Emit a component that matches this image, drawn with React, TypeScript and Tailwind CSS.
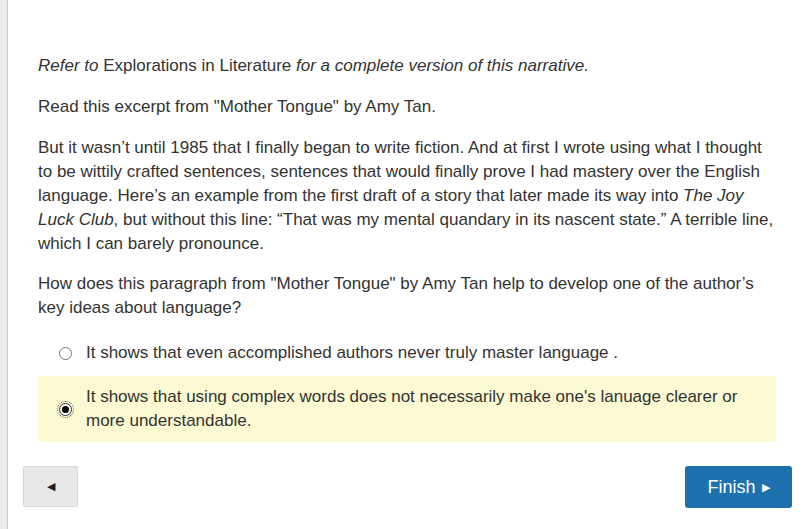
import React, { useState } from "react";

const options = [
  "It shows that even accomplished authors never truly master language .",
  "It shows that using complex words does not necessarily make one's lanuage clearer or more understandable.",
];

const App = () => {
  const [selected, setSelected] = useState(1);

  return (
    <div
      className="flex w-[807px] h-[529px] bg-white text-[#333] overflow-hidden"
      style={{ fontFamily: '"Liberation Sans", Arial, sans-serif' }}
    >
      {/* Left rail */}
      <div className="w-[8px] shrink-0 bg-[#ededed] border-r border-[#cacaca]" />

      <div className="flex-1 flex flex-col">
        {/* Question */}
        <div className="pl-[30px] pr-[31px] pt-[54px] text-[17px] leading-[24px]">
          <p className="mb-[17px]">
            <i>Refer to</i> Explorations in Literature <i>for a complete version of this narrative.</i>
          </p>
          <p className="mb-[17px]">Read this excerpt from "Mother Tongue" by Amy Tan.</p>
          <p className="mb-[16px]">
            But it wasn’t until 1985 that I finally began to write fiction. And at first I wrote using what I thought
            to be wittily crafted sentences, sentences that would finally prove I had mastery over the English
            language. Here’s an example from the first draft of a story that later made its way into <i>The Joy
            Luck Club</i>, but without this line: “That was my mental quandary in its nascent state.” A terrible line,
            which I can barely pronounce.
          </p>
          <p>
            How does this paragraph from "Mother Tongue" by Amy Tan help to develop one of the author’s key ideas
            about language?
          </p>

          {/* Answers */}
          <div className="mt-[12px] flex flex-col gap-[2px]">
            {options.map((opt, i) => (
              <label
                key={i}
                onClick={() => setSelected(i)}
                className={`flex items-center cursor-pointer py-[9px] pr-[20px] ${
                  selected === i ? "bg-[#fbfad3]" : ""
                }`}
              >
                <span className="w-[48px] shrink-0 flex justify-start pl-[21px]">
                  <span
                    className={`w-[13px] h-[13px] rounded-full border flex items-center justify-center bg-white ${
                      selected === i
                        ? "border-[#333] outline outline-1 outline-dotted outline-[#555] outline-offset-[1px]"
                        : "border-[#777]"
                    }`}
                  >
                    {selected === i && <span className="w-[7px] h-[7px] rounded-full bg-black" />}
                  </span>
                </span>
                <span className="leading-[24px]">{opt}</span>
              </label>
            ))}
          </div>
        </div>

        {/* Footer nav */}
        <div className="mt-auto mb-[21px] flex justify-between pl-[15px] pr-[15px]">
          <button className="w-[55px] h-[41px] bg-[#e8e8e8] border border-[#d8d8d8] rounded-[2px] flex items-center justify-center">
            <span className="text-[#222] text-[11px]">◀</span>
          </button>
          <button className="w-[107px] h-[42px] bg-[#1c71ae] text-white rounded-[3px] flex items-center justify-center gap-[6px] text-[18px]">
            Finish <span className="text-[11px]">▶</span>
          </button>
        </div>
      </div>
    </div>
  );
};

export default App;
